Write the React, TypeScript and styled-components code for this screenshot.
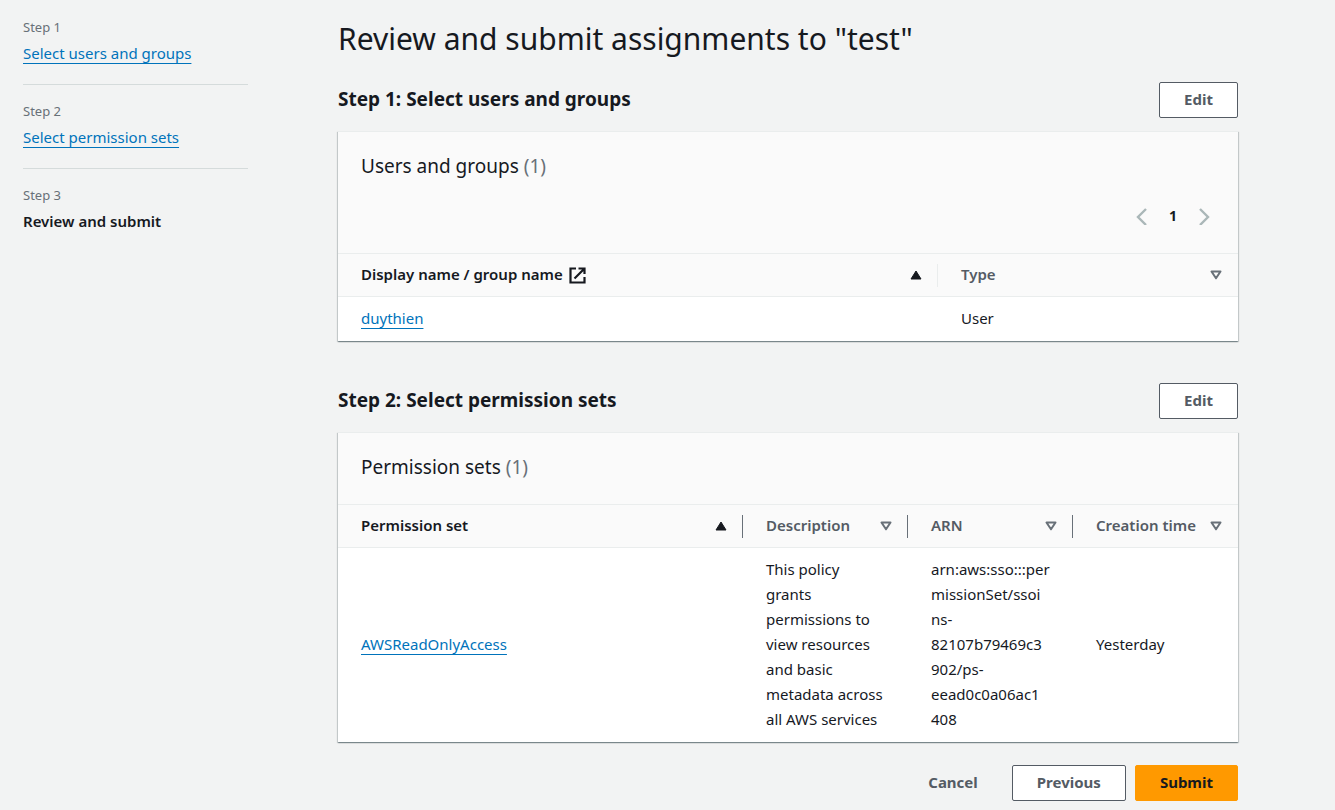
import React from "react";
import styled, { createGlobalStyle, css } from "styled-components";

const GlobalStyle = createGlobalStyle`
  *, *::before, *::after { box-sizing: border-box; }
  body {
    margin: 0;
    min-height: 100vh;
    background: #f2f3f3;
    color: #16191f;
    font: 15px/25px "Noto Sans", "Open Sans", sans-serif;
  }
  h1, h2, h3, ol { margin: 0; padding: 0; }
  button { font: inherit; color: inherit; cursor: pointer; }
`;

const Page = styled.div`
  display: grid;
  grid-template-columns: 225px minmax(0, 1fr);
  column-gap: 90px;
  padding: 16px 97px 9px 23px;
`;

const Steps = styled.ol`
  list-style: none;
`;

const Step = styled.li`
  padding-bottom: 16px;

  & + & {
    border-top: 1px solid #d5dbdb;
    padding-top: 15px;
  }
`;

const StepLabel = styled.div`
  color: #687078;
  font-size: 13px;
  line-height: 22px;
`;

const StepName = styled.div`
  font-weight: 600;
  line-height: 30px;
`;

const Link = styled.a`
  color: #0073bb;
  font-weight: 400;
  text-decoration: underline 1px;
  text-decoration-skip-ink: none;
  text-underline-offset: 4px;
`;

const Title = styled.h1`
  font-size: 30px;
  font-weight: 400;
  line-height: 46px;
  margin-bottom: 20px;
`;

const Section = styled.section`
  margin-bottom: 42px;

  &:last-of-type {
    margin-bottom: 23px;
  }
`;

const SectionHeader = styled.div`
  display: flex;
  align-items: center;
  justify-content: space-between;
  margin-bottom: 13px;
`;

const SectionTitle = styled.h2`
  font-size: 19px;
  font-weight: 700;
  line-height: 28px;
  padding-bottom: 2px;
`;

type Variant = "normal" | "primary" | "link";

const Button = styled.button<{ $variant?: Variant }>`
  height: 36px;
  padding: 0 24px 2px;
  border: 1px solid #545b64;
  border-radius: 2px;
  background: #ffffff;
  color: #545b64;
  font-weight: 700;
  line-height: 24px;

  ${({ $variant }) =>
    $variant === "primary" &&
    css`
      border-color: #ff9900;
      background: #ff9900;
      color: #16191f;
    `}
  ${({ $variant }) =>
    $variant === "link" &&
    css`
      border-color: transparent;
      background: transparent;
    `}
`;

const Card = styled.div`
  border-top: 1px solid #eaeded;
  background: #ffffff;
  box-shadow:
    0 1px 1px 0 rgba(0, 28, 36, 0.3),
    1px 1px 1px 0 rgba(0, 28, 36, 0.15),
    -1px 1px 1px 0 rgba(0, 28, 36, 0.15);
`;

const CardHeader = styled.div`
  padding: 20px 23px 23px;
  background: #fafafa;
`;

const CardTitle = styled.h3`
  font-size: 19px;
  font-weight: 400;
  line-height: 28px;
`;

const Count = styled.span`
  color: #687078;
`;

const Pagination = styled.nav`
  display: flex;
  justify-content: flex-end;
  align-items: center;
  gap: 9px;
  margin-top: 23px;
`;

const PageButton = styled.button`
  display: flex;
  align-items: center;
  justify-content: center;
  width: 22px;
  height: 27px;
  padding: 0 0 2px;
  border: 0;
  background: none;
  font-size: 14px;
  font-weight: 700;

  &:disabled {
    color: #aab7b8;
    cursor: default;
  }
`;

const Table = styled.table`
  width: 100%;
  border-collapse: separate;
  border-spacing: 0;
  table-layout: fixed;
`;

const HeadCell = styled.th<{ $width?: number; $divider?: string }>`
  width: ${({ $width }) => ($width ? `${$width}px` : "auto")};
  padding: 10px 0 9px;
  border-top: 1px solid #eaeded;
  border-bottom: 1px solid #eaeded;
  background: #fafafa;
  text-align: left;

  & > button {
    border-right: 1px solid ${({ $divider }) => $divider ?? "transparent"};
  }
`;

const SortButton = styled.button<{ $active?: boolean }>`
  display: flex;
  align-items: center;
  justify-content: space-between;
  width: 100%;
  height: 23px;
  padding: 0 15px 1px 23px;
  border: 0;
  background: none;
  color: ${({ $active }) => ($active ? "#16191f" : "#545b64")};
  font-weight: 600;
  line-height: 22px;
  white-space: nowrap;
`;

const HeadLabel = styled.span`
  display: flex;
  align-items: center;
  gap: 6px;
  padding-bottom: 2px;

  & > svg {
    margin-top: 3px;
  }
`;

const Cell = styled.td`
  padding: 9px 23px 10px;
  vertical-align: middle;
  overflow-wrap: anywhere;
`;

const Actions = styled.div`
  display: flex;
  justify-content: flex-end;
  gap: 9px;
`;

function SortIcon({ active }: { active?: boolean }) {
  return active ? (
    <svg width="12" height="12" viewBox="0 0 12 12" aria-hidden="true">
      <path d="M6 2 11 10H1z" fill="#16191f" stroke="#16191f" strokeLinejoin="round" />
    </svg>
  ) : (
    <svg width="12" height="12" viewBox="0 0 12 12" aria-hidden="true">
      <path d="M1.500 2.500h9L6 9.300z" fill="none" stroke="#687078" strokeWidth="2" strokeLinejoin="round" />
    </svg>
  );
}

function Chevron({ direction }: { direction: "left" | "right" }) {
  return (
    <svg width="18" height="18" viewBox="0 0 18 18" fill="none" stroke="currentColor" strokeWidth="2.4" aria-hidden="true">
      <path d={direction === "left" ? "M13 2 5 10l8 8" : "M5 2l8 8-8 8"} />
    </svg>
  );
}

function ExternalIcon() {
  return (
    <svg width="17" height="17" viewBox="0 0 17 17" fill="none" stroke="currentColor" strokeWidth="2.2" aria-hidden="true">
      <path d="M7 1.500H1.500v14h14V10M9.500 1.500h6V7M15.500 1.500 5.500 11.500" />
    </svg>
  );
}

interface ColumnProps {
  label: React.ReactNode;
  width?: number;
  divider?: string;
  active?: boolean;
}

function Column({ label, width, divider, active }: ColumnProps) {
  return (
    <HeadCell scope="col" $width={width} $divider={divider} aria-sort={active ? "ascending" : "none"}>
      <SortButton type="button" $active={active}>
        <HeadLabel>{label}</HeadLabel>
        <SortIcon active={active} />
      </SortButton>
    </HeadCell>
  );
}

export default function App() {
  return (
    <>
      <GlobalStyle />
      <Page>
        <nav aria-label="Steps">
          <Steps>
            <Step>
              <StepLabel>Step 1</StepLabel>
              <StepName><Link href="#users">Select users and groups</Link></StepName>
            </Step>
            <Step>
              <StepLabel>Step 2</StepLabel>
              <StepName><Link href="#permissions">Select permission sets</Link></StepName>
            </Step>
            <Step aria-current="step">
              <StepLabel>Step 3</StepLabel>
              <StepName>Review and submit</StepName>
            </Step>
          </Steps>
        </nav>

        <main>
          <Title>Review and submit assignments to "test"</Title>

          <Section id="users">
            <SectionHeader>
              <SectionTitle>Step 1: Select users and groups</SectionTitle>
              <Button type="button">Edit</Button>
            </SectionHeader>
            <Card>
              <CardHeader>
                <CardTitle>Users and groups <Count>(1)</Count></CardTitle>
                <Pagination aria-label="Pages">
                  <PageButton type="button" disabled aria-label="Previous page"><Chevron direction="left" /></PageButton>
                  <PageButton type="button" aria-current="page">1</PageButton>
                  <PageButton type="button" disabled aria-label="Next page"><Chevron direction="right" /></PageButton>
                </Pagination>
              </CardHeader>
              <Table>
                <thead>
                  <tr>
                    <Column active divider="#eaeded" label={<>Display name / group name <ExternalIcon /></>} />
                    <Column label="Type" width={300} />
                  </tr>
                </thead>
                <tbody>
                  <tr>
                    <Cell><Link href="#duythien">duythien</Link></Cell>
                    <Cell>User</Cell>
                  </tr>
                </tbody>
              </Table>
            </Card>
          </Section>

          <Section id="permissions">
            <SectionHeader>
              <SectionTitle>Step 2: Select permission sets</SectionTitle>
              <Button type="button">Edit</Button>
            </SectionHeader>
            <Card>
              <CardHeader>
                <CardTitle>Permission sets <Count>(1)</Count></CardTitle>
              </CardHeader>
              <Table>
                <thead>
                  <tr>
                    <Column active divider="#687078" label="Permission set" />
                    <Column label="Description" width={165} divider="#687078" />
                    <Column label="ARN" width={165} divider="#687078" />
                    <Column label="Creation time" width={165} />
                  </tr>
                </thead>
                <tbody>
                  <tr>
                    <Cell><Link href="#AWSReadOnlyAccess">AWSReadOnlyAccess</Link></Cell>
                    <Cell>This policy grants permissions to view resources and basic metadata across all AWS services</Cell>
                    <Cell>
                      arn:aws:sso:::permissionSet/ssoi
                      <br />
                      ns-82107b79469c3902/ps-eead0c0a06ac1
                      <br />
                      408
                    </Cell>
                    <Cell>Yesterday</Cell>
                  </tr>
                </tbody>
              </Table>
            </Card>
          </Section>

          <Actions>
            <Button type="button" $variant="link">Cancel</Button>
            <Button type="button">Previous</Button>
            <Button type="button" $variant="primary">Submit</Button>
          </Actions>
        </main>
      </Page>
    </>
  );
}
